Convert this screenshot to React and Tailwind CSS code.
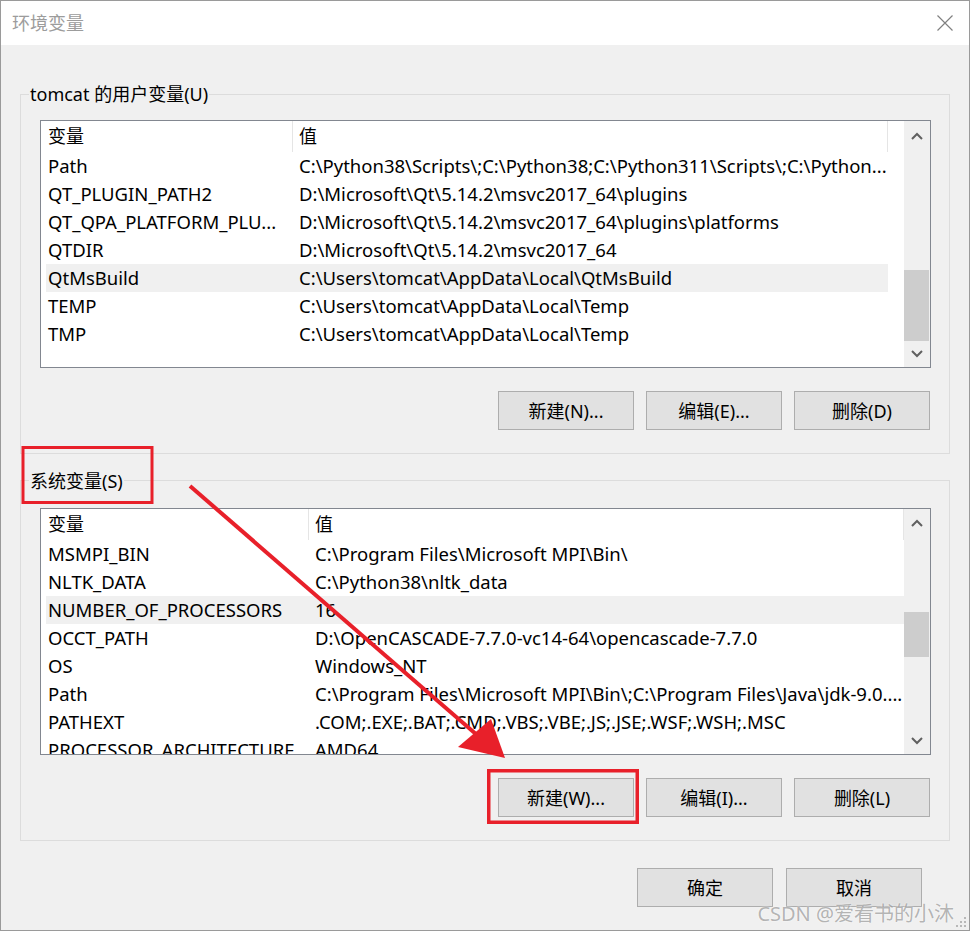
import React from 'react';

const userVars = [
  { name: 'Path', value: 'C:\\Python38\\Scripts\\;C:\\Python38;C:\\Python311\\Scripts\\;C:\\Python...' },
  { name: 'QT_PLUGIN_PATH2', value: 'D:\\Microsoft\\Qt\\5.14.2\\msvc2017_64\\plugins' },
  { name: 'QT_QPA_PLATFORM_PLU...', value: 'D:\\Microsoft\\Qt\\5.14.2\\msvc2017_64\\plugins\\platforms' },
  { name: 'QTDIR', value: 'D:\\Microsoft\\Qt\\5.14.2\\msvc2017_64' },
  { name: 'QtMsBuild', value: 'C:\\Users\\tomcat\\AppData\\Local\\QtMsBuild', selected: true },
  { name: 'TEMP', value: 'C:\\Users\\tomcat\\AppData\\Local\\Temp' },
  { name: 'TMP', value: 'C:\\Users\\tomcat\\AppData\\Local\\Temp' },
];

const systemVars = [
  { name: 'MSMPI_BIN', value: 'C:\\Program Files\\Microsoft MPI\\Bin\\' },
  { name: 'NLTK_DATA', value: 'C:\\Python38\\nltk_data' },
  { name: 'NUMBER_OF_PROCESSORS', value: '16', selected: true },
  { name: 'OCCT_PATH', value: 'D:\\OpenCASCADE-7.7.0-vc14-64\\opencascade-7.7.0' },
  { name: 'OS', value: 'Windows_NT' },
  { name: 'Path', value: 'C:\\Program Files\\Microsoft MPI\\Bin\\;C:\\Program Files\\Java\\jdk-9.0....' },
  { name: 'PATHEXT', value: '.COM;.EXE;.BAT;.CMD;.VBS;.VBE;.JS;.JSE;.WSF;.WSH;.MSC' },
  { name: 'PROCESSOR_ARCHITECTURE', value: 'AMD64' },
];

const Chevron = ({ down }) => (
  <svg width="12" height="8" viewBox="0 0 12 8">
    <polyline
      points={down ? '1,1 6,6 11,1' : '1,7 6,2 11,7'}
      fill="none"
      stroke="#606060"
      strokeWidth="2"
    />
  </svg>
);

const Button = ({ children }) => (
  <button className="w-[136px] h-[39px] bg-[#e1e1e1] border border-[#adadad] text-[18px] text-black leading-none">
    {children}
  </button>
);

// list view with header, rows and a vertical scrollbar
const VarList = ({ rows, height, col1, col2, upH, thumbTop, thumbH }) => (
  <div className="flex bg-white border border-[#828790]" style={{ height }}>
    <div className="flex-1 flex flex-col overflow-hidden">
      <div className="flex h-[31px] shrink-0 leading-[31px]">
        <div className="pl-[7px] border-r border-[#e5e5e5]" style={{ width: col1 + 5 }}>变量</div>
        <div className="pl-[6px] border-r border-[#e5e5e5]" style={{ width: col2 }}>值</div>
      </div>
      {rows.map((r, i) => (
        <div
          key={i}
          className={`flex h-[28px] shrink-0 ml-[5px] leading-[28px] text-[18.5px] whitespace-nowrap ${r.selected ? 'bg-[#f0f0f0]' : ''}`}
          style={{ width: col1 + col2 }}
        >
          <div className="pl-[2px] overflow-hidden" style={{ width: col1 }}>{r.name}</div>
          <div className="pl-[6px] overflow-hidden flex-1">{r.value}</div>
        </div>
      ))}
    </div>
    <div className="w-[26px] bg-[#f0f0f0] flex flex-col">
      <div className="flex items-center justify-center shrink-0" style={{ height: upH }}>
        <Chevron />
      </div>
      <div className="flex-1">
        <div className="mr-[1px] bg-[#cdcdcd]" style={{ marginTop: thumbTop, height: thumbH }} />
      </div>
      <div className="h-[26px] flex items-center justify-center shrink-0">
        <Chevron down />
      </div>
    </div>
  </div>
);

const App = () => {
  return (
    <div className="relative w-[970px] h-[931px] overflow-hidden border border-[#9a9a9a] bg-[#f0f0f0] flex flex-col text-[18px] text-black font-['Noto_Sans','Noto_Sans_CJK_SC',sans-serif]">
      {/* Title bar */}
      <div className="h-[44px] shrink-0 bg-white flex items-center justify-between pl-[11px] pr-[16px]">
        <span className="text-[18px] text-[#9c9c9c]">环境变量</span>
        <svg width="16" height="16" viewBox="0 0 16 16">
          <path d="M0.5 0.5 L15.5 15.5 M15.5 0.5 L0.5 15.5" stroke="#808080" strokeWidth="1.2" />
        </svg>
      </div>

      <div className="px-[19px]">
        {/* User variables */}
        <div className="relative mt-[49px] border border-[#dcdcdc] pt-[25px] pl-[19px] pr-[18px] pb-[23px]">
          <span className="absolute left-[8px] -top-[13px] leading-[24px] px-[1px] bg-[#f0f0f0]">tomcat 的用户变量(U)</span>
          <VarList rows={userVars} height={248} col1={247} col2={595} upH={30} thumbTop={119} thumbH={71} />
          <div className="mt-[23px] flex justify-end gap-[12px] pr-[1px]">
            <Button>新建(N)...</Button>
            <Button>编辑(E)...</Button>
            <Button>删除(D)</Button>
          </div>
        </div>

        {/* System variables */}
        <div className="relative mt-[26px] border border-[#dcdcdc] pt-[27px] pl-[19px] pr-[18px] pb-[23px]">
          <span className="absolute left-[8px] -top-[12px] leading-[24px] px-[1px] bg-[#f0f0f0]">系统变量(S)</span>
          <VarList rows={systemVars} height={247} col1={263} col2={595} upH={28} thumbTop={75} thumbH={45} />
          <div className="mt-[23px] flex justify-end gap-[12px] pr-[1px]">
            <Button>新建(W)...</Button>
            <Button>编辑(I)...</Button>
            <Button>删除(L)</Button>
          </div>
        </div>
      </div>

      {/* OK / Cancel */}
      <div className="mt-[27px] flex justify-end gap-[13px] pr-[47px]">
        <Button>确定</Button>
        <Button>取消</Button>
      </div>

      {/* red annotations drawn over the dialog */}
      <svg className="absolute left-0 top-0 pointer-events-none" width="970" height="931" viewBox="0 0 970 931">
        <rect x="22" y="446.5" width="129" height="55" fill="none" stroke="#e8202a" strokeWidth="3" />
        <rect x="487.75" y="769.75" width="148.5" height="51.5" fill="none" stroke="#e8202a" strokeWidth="3.5" />
        <line x1="189" y1="485" x2="476" y2="734" stroke="#e8202a" strokeWidth="4" />
        <polygon points="504,757 457,746 490,718" fill="#e8202a" />
      </svg>

      {/* resize grip */}
      <svg className="absolute right-[2px] bottom-[2px]" width="12" height="12" viewBox="0 0 12 12">
        <rect x="9" y="1" width="2" height="2" fill="#b8b8b8" />
        <rect x="5" y="5" width="2" height="2" fill="#b8b8b8" />
        <rect x="9" y="5" width="2" height="2" fill="#b8b8b8" />
        <rect x="1" y="9" width="2" height="2" fill="#b8b8b8" />
        <rect x="5" y="9" width="2" height="2" fill="#b8b8b8" />
        <rect x="9" y="9" width="2" height="2" fill="#b8b8b8" />
      </svg>

      {/* watermark */}
      <span className="absolute right-[15px] bottom-[3px] text-[20px] leading-[26px] text-[rgba(120,120,120,0.55)] [text-shadow:0_0_2px_rgba(255,255,255,0.9)]">
        CSDN @爱看书的小沐
      </span>
    </div>
  );
};

export default App;
